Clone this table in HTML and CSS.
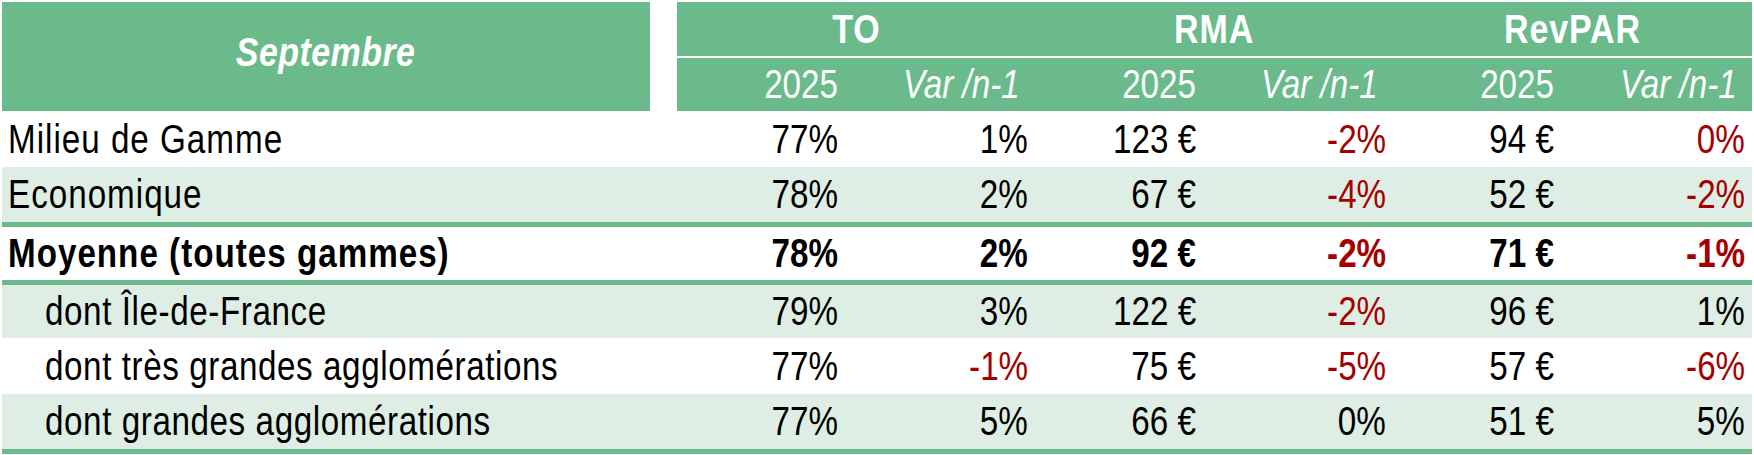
FILE: index.html
```html
<!DOCTYPE html>
<html lang="fr">
<head>
<meta charset="utf-8">
<title>Septembre</title>
<link rel="stylesheet" href="styles.css">
</head>
<body>
<div class="table">
  <div class="head">
    <div class="hlabel"><span class="t">Septembre</span></div>
    <div class="hspacer"></div>
    <div class="hgroup"><span class="t">TO</span></div>
    <div class="hgroup"><span class="t">RMA</span></div>
    <div class="hgroup"><span class="t">RevPAR</span></div>
    <div class="hsub first"><span class="t">2025</span></div>
    <div class="hsub var"><span class="t">Var /n-1</span></div>
    <div class="hsub"><span class="t">2025</span></div>
    <div class="hsub var"><span class="t">Var /n-1</span></div>
    <div class="hsub"><span class="t">2025</span></div>
    <div class="hsub var"><span class="t">Var /n-1</span></div>
  </div>

  <div class="row tall">
    <div class="label"><span class="t">Milieu de Gamme</span></div><div></div>
    <div class="num"><span class="t">77%</span></div><div class="num"><span class="t">1%</span></div>
    <div class="num"><span class="t">123 €</span></div><div class="num neg"><span class="t">-2%</span></div>
    <div class="num"><span class="t">94 €</span></div><div class="num neg"><span class="t">0%</span></div>
  </div>
  <div class="row light mid rule">
    <div class="label"><span class="t">Economique</span></div><div></div>
    <div class="num"><span class="t">78%</span></div><div class="num"><span class="t">2%</span></div>
    <div class="num"><span class="t">67 €</span></div><div class="num neg"><span class="t">-4%</span></div>
    <div class="num"><span class="t">52 €</span></div><div class="num neg"><span class="t">-2%</span></div>
  </div>
  <div class="row short bold rule">
    <div class="label"><span class="t">Moyenne (toutes gammes)</span></div><div></div>
    <div class="num"><span class="t">78%</span></div><div class="num"><span class="t">2%</span></div>
    <div class="num"><span class="t">92 €</span></div><div class="num neg"><span class="t">-2%</span></div>
    <div class="num"><span class="t">71 €</span></div><div class="num neg"><span class="t">-1%</span></div>
  </div>
  <div class="row light short">
    <div class="label sub"><span class="t">dont Île-de-France</span></div><div></div>
    <div class="num"><span class="t">79%</span></div><div class="num"><span class="t">3%</span></div>
    <div class="num"><span class="t">122 €</span></div><div class="num neg"><span class="t">-2%</span></div>
    <div class="num"><span class="t">96 €</span></div><div class="num"><span class="t">1%</span></div>
  </div>
  <div class="row tall">
    <div class="label sub"><span class="t">dont très grandes agglomérations</span></div><div></div>
    <div class="num"><span class="t">77%</span></div><div class="num neg"><span class="t">-1%</span></div>
    <div class="num"><span class="t">75 €</span></div><div class="num neg"><span class="t">-5%</span></div>
    <div class="num"><span class="t">57 €</span></div><div class="num neg"><span class="t">-6%</span></div>
  </div>
  <div class="row light mid rule">
    <div class="label sub"><span class="t">dont grandes agglomérations</span></div><div></div>
    <div class="num"><span class="t">77%</span></div><div class="num"><span class="t">5%</span></div>
    <div class="num"><span class="t">66 €</span></div><div class="num"><span class="t">0%</span></div>
    <div class="num"><span class="t">51 €</span></div><div class="num"><span class="t">5%</span></div>
  </div>
</div>
</body>
</html>
```

FILE: styles.css
```css
html, body {
  margin: 0;
  padding: 0;
  background: #ffffff;
}

.table {
  padding: 2px 0 0 2px;
  width: 1750px;
  font-family: "Liberation Sans", Arial, sans-serif;
  font-size: 40px;
  color: #000000;
}

/* Condensed look of the original (Arial Narrow style) */
.t {
  display: inline-block;
  white-space: nowrap;
  transform: scaleX(0.83);
}

.head,
.row {
  display: grid;
  grid-template-columns: 648px 27px 168px 190px 168px 190px 168px 191px;
}

.head {
  grid-template-rows: 54px 53px;
  row-gap: 2px;
  color: #ffffff;
}

.hlabel {
  grid-row: 1 / 3;
  grid-column: 1;
  background: #6aba8b;
  display: flex;
  align-items: center;
  justify-content: center;
  padding-bottom: 8px;
  box-sizing: border-box;
  font-weight: bold;
  font-style: italic;
}

.hlabel .t {
  transform: scaleX(0.85);
  letter-spacing: 0.5px;
}

.hspacer {
  grid-row: 1 / 3;
  grid-column: 2;
}

.hgroup {
  grid-column: span 2;
  background: #6aba8b;
  font-weight: bold;
  display: flex;
  align-items: center;
  justify-content: center;
}

.hgroup .t {
  transform: scaleX(0.85);
  letter-spacing: 1px;
}

.hsub {
  background: #6aba8b;
  display: flex;
  align-items: center;
  justify-content: flex-end;
  padding-right: 7px;
}

.hsub .t {
  transform-origin: right center;
}

.hsub.first {
  grid-column: 3;
}

.hsub.var {
  font-style: italic;
  padding-right: 15px;
}

.row {
  align-items: center;
}

.row.tall { height: 56px; }
.row.mid { height: 55px; }
.row.short { height: 53px; }

.row.light {
  background: #dfeee4;
}

.row.rule {
  border-bottom: 5px solid #6aba8b;
}

.row.bold {
  font-weight: bold;
}

.label {
  padding-left: 6px;
  white-space: nowrap;
}

.label .t {
  transform-origin: left center;
  letter-spacing: 1.2px;
}

.label.sub {
  padding-left: 43px;
}

.label.sub .t {
  letter-spacing: 0.7px;
}

.num {
  text-align: right;
  padding-right: 7px;
}

.num .t {
  transform-origin: right center;
}

.neg {
  color: #a50000;
}
```
